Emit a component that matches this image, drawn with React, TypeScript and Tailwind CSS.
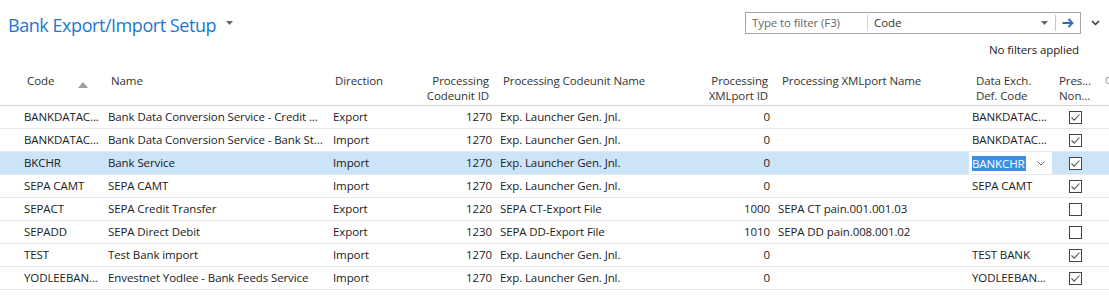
import React from "react";

type Row = {
  code: string;
  name: string;
  dir: string;
  cuId: string;
  cuName: string;
  xpId: string;
  xpName: string;
  dx: string;
  chk: boolean;
  sel?: boolean;
};

const rows: Row[] = [
  { code: "BANKDATAC...", name: "Bank Data Conversion Service - Credit ...", dir: "Export", cuId: "1270", cuName: "Exp. Launcher Gen. Jnl.", xpId: "0", xpName: "", dx: "BANKDATAC...", chk: true },
  { code: "BANKDATAC...", name: "Bank Data Conversion Service - Bank St...", dir: "Import", cuId: "1270", cuName: "Exp. Launcher Gen. Jnl.", xpId: "0", xpName: "", dx: "BANKDATAC...", chk: true },
  { code: "BKCHR", name: "Bank Service", dir: "Import", cuId: "1270", cuName: "Exp. Launcher Gen. Jnl.", xpId: "0", xpName: "", dx: "BANKCHR", chk: true, sel: true },
  { code: "SEPA CAMT", name: "SEPA CAMT", dir: "Import", cuId: "1270", cuName: "Exp. Launcher Gen. Jnl.", xpId: "0", xpName: "", dx: "SEPA CAMT", chk: true },
  { code: "SEPACT", name: "SEPA Credit Transfer", dir: "Export", cuId: "1220", cuName: "SEPA CT-Export File", xpId: "1000", xpName: "SEPA CT pain.001.001.03", dx: "", chk: false },
  { code: "SEPADD", name: "SEPA Direct Debit", dir: "Export", cuId: "1230", cuName: "SEPA DD-Export File", xpId: "1010", xpName: "SEPA DD pain.008.001.02", dx: "", chk: false },
  { code: "TEST", name: "Test Bank import", dir: "Import", cuId: "1270", cuName: "Exp. Launcher Gen. Jnl.", xpId: "0", xpName: "", dx: "TEST BANK", chk: true },
  { code: "YODLEEBAN...", name: "Envestnet Yodlee - Bank Feeds Service", dir: "Import", cuId: "1270", cuName: "Exp. Launcher Gen. Jnl.", xpId: "0", xpName: "", dx: "YODLEEBAN...", chk: true },
];

const GRID = "grid grid-cols-[20px_84px_225px_91px_76px_204px_74px_194px_87px_45px_9px]";

function Checkbox({ checked }: { checked: boolean }) {
  return (
    <div className="w-[13px] h-[13px] border border-[#444] bg-white flex items-center justify-center">
      {checked && (
        <svg width="11" height="11" viewBox="0 0 11 11">
          <path d="M1.5 5.5 L4.2 8.2 L9.5 2.5" fill="none" stroke="#555" strokeWidth="1.1" />
        </svg>
      )}
    </div>
  );
}

export default function App() {
  return (
    <div
      className="w-[1109px] h-[302px] overflow-hidden bg-white text-[#212121] tracking-[-0.1px]"
      style={{ fontFamily: '"Segoe UI", "Open Sans", "Noto Sans", sans-serif' }}
    >
      {/* top area */}
      <div className="h-[70px] flex flex-col">
        <div className="h-[42px] flex items-start">
          <div className="mt-[12px] pl-[8px] flex items-center h-[26px]">
            <span className="text-[18px] leading-[26px] text-[#1a78d2] tracking-[-0.45px]">Bank Export/Import Setup</span>
            <svg className="ml-[10px] mt-[-4px]" width="7" height="4" viewBox="0 0 7 4">
              <path d="M0 0 L7 0 L3.5 4 Z" fill="#666" />
            </svg>
          </div>
          <div className="ml-auto mt-[12px] w-[336px] h-[22px] border border-[#a6a6a6] flex items-center text-[11.5px]">
            <div className="w-[122px] h-[16px] flex items-center pl-[6px] text-[#666] border-r border-[#d6d6d6]">
              Type to filter (F3)
            </div>
            <div className="flex-1 pl-[6px] text-[#333]">Code</div>
            <svg className="mr-[7px]" width="7" height="4" viewBox="0 0 7 4">
              <path d="M0 0 L7 0 L3.5 4 Z" fill="#666" />
            </svg>
            <div className="w-px h-[16px] bg-[#c8c8c8]" />
            <div className="w-[24px] flex items-center justify-center">
              <svg width="12" height="10" viewBox="0 0 12 10">
                <path d="M0.5 5 H10.5 M6.5 1 L10.5 5 L6.5 9" fill="none" stroke="#2e6db4" strokeWidth="1.8" />
              </svg>
            </div>
          </div>
          <div className="w-[28px] mt-[12px] h-[22px] flex items-center justify-center">
            <svg width="9" height="6" viewBox="0 0 9 6">
              <path d="M1 1 L4.5 4.5 L8 1" fill="none" stroke="#333" strokeWidth="1.5" />
            </svg>
          </div>
        </div>
        <div className="h-[16px] flex justify-end pr-[30px] text-[11.5px] leading-[16px] text-[#212121]">No filters applied</div>
      </div>

      {/* header */}
      <div className={`${GRID} h-[36px] border-b border-[#d4d4d4] text-[11.5px] leading-[15px] text-[#333] pt-[3px]`}>
        <div />
        <div className="pl-[7px] flex items-start">
          <span>Code</span>
          <svg className="ml-[24px] mt-[9px]" width="10" height="6" viewBox="0 0 10 6">
            <path d="M0 6 L5 0 L10 6 Z" fill="#a0a0a0" />
          </svg>
        </div>
        <div className="pl-[7px]">Name</div>
        <div className="pl-[6px]">Direction</div>
        <div className="pr-[7px] text-right">Processing<br />Codeunit ID</div>
        <div className="pl-[7px]">Processing Codeunit Name</div>
        <div className="pr-[6px] text-right">Processing<br />XMLport ID</div>
        <div className="pl-[8px]">Processing XMLport Name</div>
        <div className="pl-[8px]">Data Exch.<br />Def. Code</div>
        <div className="pl-[4px]">Pres...<br />Non...</div>
        <div className="pl-[5px] text-[#888] overflow-hidden text-[9px]">C</div>
      </div>

      {/* rows */}
      {rows.map((r, i) => (
        <div
          key={i}
          className={`${GRID} h-[23px] border-b border-[#e8e8e8] text-[11.5px] leading-[22px] whitespace-nowrap ${r.sel ? "bg-[#cce4f7]" : "bg-white"}`}
        >
          <div />
          <div className="pl-[4px] overflow-hidden">{r.code}</div>
          <div className="pl-[4px] overflow-hidden">{r.name}</div>
          <div className="pl-[4px]">{r.dir}</div>
          <div className="pr-[4px] text-right">{r.cuId}</div>
          <div className="pl-[4px] overflow-hidden">{r.cuName}</div>
          <div className="pr-[4px] text-right">{r.xpId}</div>
          <div className="pl-[4px] overflow-hidden">{r.xpName}</div>
          {r.sel ? (
            <div className="pl-[1px] pr-[3px] flex">
              <div className="flex-1 bg-white flex items-center pl-[3px]">
                <span className="bg-[#3a8ee6] text-white leading-[15px]">{r.dx}</span>
                <span className="w-px h-[15px] bg-[#d9711a]" />
                <svg className="ml-auto mr-[7px]" width="8" height="5" viewBox="0 0 8 5">
                  <path d="M0.5 0.5 L4 4 L7.5 0.5" fill="none" stroke="#666" strokeWidth="1" />
                </svg>
              </div>
            </div>
          ) : (
            <div className="pl-[4px] overflow-hidden">{r.dx}</div>
          )}
          <div className="pl-[14px] flex items-center">
            <Checkbox checked={r.chk} />
          </div>
          <div />
        </div>
      ))}
    </div>
  );
}
